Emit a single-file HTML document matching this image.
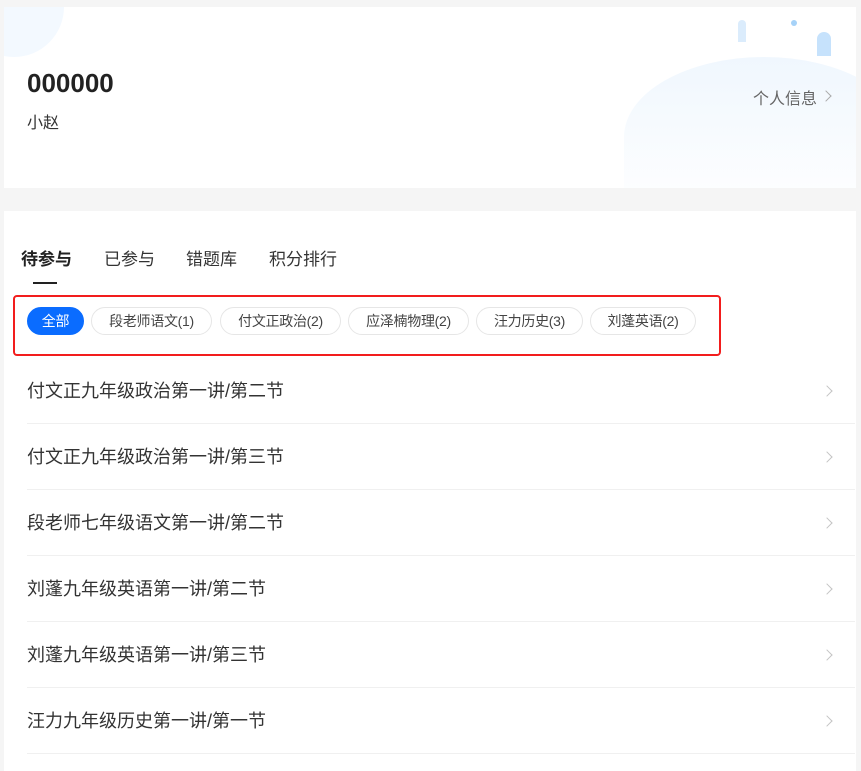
<!DOCTYPE html>
<html><head><meta charset="utf-8"><style>
*{margin:0;padding:0;box-sizing:border-box}
body{width:861px;height:759px;overflow:hidden;background:#f5f5f5;font-family:"Liberation Sans","Noto Sans CJK SC",sans-serif;position:relative}
.c1{position:absolute;left:4px;top:7px;width:852px;height:181px;background:#fff;overflow:hidden}
.c2{position:absolute;left:4px;top:211px;width:852px;height:560px;background:#fff}
.a{position:absolute}
.tab{position:absolute;top:245px;font-size:17px;color:#333}
.chip{position:absolute;top:307px;height:28px;line-height:26px;border:1px solid #e6e6e6;border-radius:14px;font-size:14px;color:#444;text-align:center;letter-spacing:-0.3px}
.row{position:absolute;left:27px;width:828px;height:66px;border-bottom:1px solid #f0f0f0;font-size:18px;color:#333;line-height:66px}
.chev{position:absolute;right:24px;top:29px;width:8px;height:8px;border-top:1px solid #c4c4c4;border-right:1px solid #c4c4c4;transform:rotate(45deg)}
</style></head><body>
<div class="c1">
<div class="a" style="left:-40px;top:-50px;width:100px;height:100px;border-radius:50%;background:#f3f9ff"></div>
<div class="a" style="left:620px;top:50px;width:280px;height:160px;border-radius:50% 50% 0 0;background:linear-gradient(#f0f7fe,#fff)"></div>
<div class="a" style="left:734px;top:13px;width:8px;height:22px;border-radius:4px 4px 0 0;background:#dbecfc"></div>
<div class="a" style="left:813px;top:25px;width:14px;height:24px;border-radius:7px 7px 0 0;background:#c6e2fc"></div>
<div class="a" style="left:787px;top:13px;width:6px;height:6px;border-radius:50%;background:#a6d2f8"></div>
</div>
<div class="a" style="left:27px;top:68px;font-size:26px;font-weight:bold;color:#222">000000</div>
<div class="a" style="left:27px;top:109px;font-size:16px;color:#333">小赵</div>
<div class="a" style="left:753px;top:85px;font-size:16px;color:#666">个人信息</div>
<div class="a" style="left:822px;top:92px;width:8px;height:8px;border-top:1.3px solid #aaa;border-right:1.3px solid #aaa;transform:rotate(45deg)"></div>
<div class="c2"></div>
<div class="tab" style="left:21px;font-weight:bold;color:#222">待参与</div>
<div class="tab" style="left:104px">已参与</div>
<div class="tab" style="left:186px">错题库</div>
<div class="tab" style="left:269px">积分排行</div>
<div class="a" style="left:33px;top:282px;width:24px;height:2px;background:#222"></div>
<div class="a" style="left:13px;top:295px;width:708px;height:61px;border:2px solid #f21d1d;border-radius:4px"></div>
<div class="chip" style="left:27px;width:57px;background:#0a6cff;border-color:#0a6cff;color:#fff">全部</div>
<div class="chip" style="left:91px;width:121px">段老师语文(1)</div>
<div class="chip" style="left:220px;width:121px">付文正政治(2)</div>
<div class="chip" style="left:348px;width:121px">应泽楠物理(2)</div>
<div class="chip" style="left:476px;width:107px">汪力历史(3)</div>
<div class="chip" style="left:590px;width:106px">刘蓬英语(2)</div>
<div class="row" style="top:358px">付文正九年级政治第一讲/第二节<span class="chev"></span></div>
<div class="row" style="top:424px">付文正九年级政治第一讲/第三节<span class="chev"></span></div>
<div class="row" style="top:490px">段老师七年级语文第一讲/第二节<span class="chev"></span></div>
<div class="row" style="top:556px">刘蓬九年级英语第一讲/第二节<span class="chev"></span></div>
<div class="row" style="top:622px">刘蓬九年级英语第一讲/第三节<span class="chev"></span></div>
<div class="row" style="top:688px">汪力九年级历史第一讲/第一节<span class="chev"></span></div>
</body></html>
